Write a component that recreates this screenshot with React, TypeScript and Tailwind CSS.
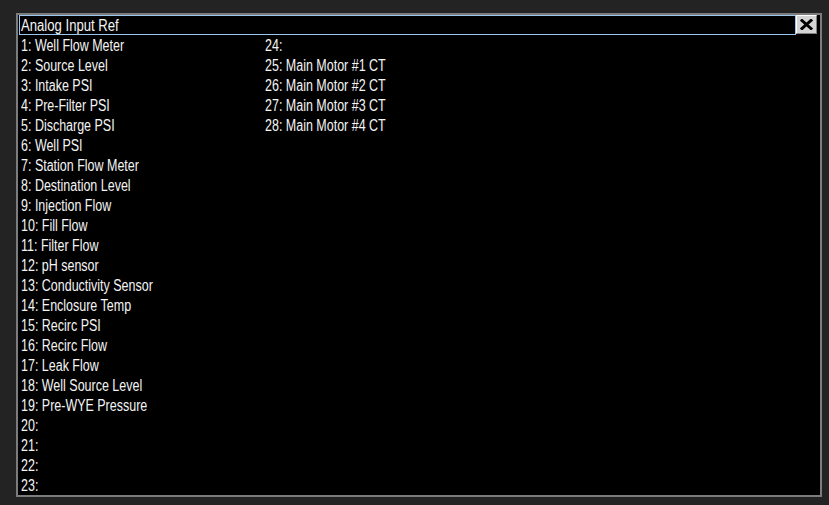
const left = [
  "1: Well Flow Meter",
  "2: Source Level",
  "3: Intake PSI",
  "4: Pre-Filter PSI",
  "5: Discharge PSI",
  "6: Well PSI",
  "7: Station Flow Meter",
  "8: Destination Level",
  "9: Injection Flow",
  "10: Fill Flow",
  "11: Filter Flow",
  "12: pH sensor",
  "13: Conductivity Sensor",
  "14: Enclosure Temp",
  "15: Recirc PSI",
  "16: Recirc Flow",
  "17: Leak Flow",
  "18: Well Source Level",
  "19: Pre-WYE Pressure",
  "20:",
  "21:",
  "22:",
  "23:",
];

const right = [
  "24:",
  "25: Main Motor #1 CT",
  "26: Main Motor #2 CT",
  "27: Main Motor #3 CT",
  "28: Main Motor #4 CT",
];

// no narrow font installed, so squeeze Liberation Sans to look like Arial Narrow
function Column({ items, width }: { items: string[]; width?: string }) {
  return (
    <div className={`flex flex-col ${width ?? ""}`}>
      {items.map((t) => (
        <div key={t} className="h-5 leading-5 whitespace-pre origin-left scale-x-[0.78]">
          {t}
        </div>
      ))}
    </div>
  );
}

export default function App() {
  return (
    <div className="w-[829px] h-[505px] bg-[#232323] pt-[13px] pl-4 overflow-hidden">
      <div className="w-[806px] h-[484px] border-2 border-[#7c7c7c] bg-black overflow-hidden font-['Liberation_Sans',sans-serif] text-[16px] text-[#f4f4f4]">
        <div className="flex items-start pl-px">
          <div className="flex-1 h-5 border border-[#9cc6ee] leading-[18px] pl-px pt-px">
            <div className="origin-left scale-x-[0.82] whitespace-pre">Analog Input Ref</div>
          </div>
          <button className="w-[21px] h-[19px] mr-[3px] bg-[#d4d4d4] border border-t-white border-l-white border-r-[#808080] border-b-[#808080] flex items-center justify-center">
            <svg width="13" height="11" viewBox="0 0 13 11">
              <path d="M2 1.5 L11 9.5 M11 1.5 L2 9.5" stroke="#000" strokeWidth="3" strokeLinecap="square" />
            </svg>
          </button>
        </div>
        <div className="flex pl-[3px] pt-px">
          <Column items={left} width="w-[244px]" />
          <Column items={right} />
        </div>
      </div>
    </div>
  );
}
